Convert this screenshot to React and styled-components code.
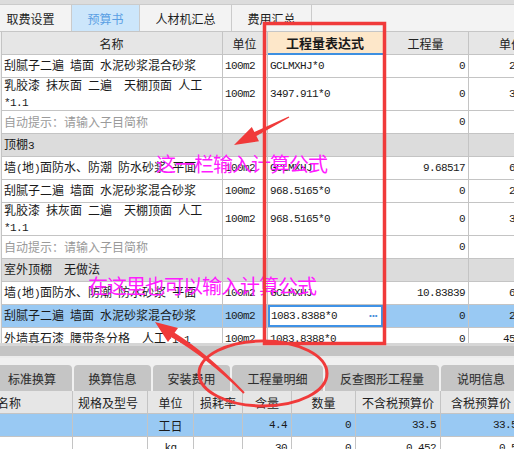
import React from "react";
import styled, { createGlobalStyle } from "styled-components";

const GlobalStyle = createGlobalStyle`
  html, body {
    margin: 0;
    padding: 0;
  }
  body {
    background: #f0f0f0;
    font-family: "Noto Sans CJK SC", "Noto Sans", sans-serif;
    color: #1a1a1a;
  }
`;

const LINE = "#c4c4c4";
const SELECTED = "#99c9f3";

const TOP_TABS = [
  { label: "取费设置", w: 82 },
  { label: "预算书", w: 68, active: true },
  { label: "人材机汇总", w: 92 },
  { label: "费用汇总", w: 80 },
];

const ROWS = [
  { name: "刮腻子二遍 墙面 水泥砂浆混合砂浆", unit: "100m2", expr: "GCLMXHJ*0", qty: "0", price: "2345.67" },
  { name: "乳胶漆 抹灰面 二遍  天棚顶面 人工\n*1.1", unit: "100m2", expr: "3497.911*0", qty: "0", price: "3216.40", h: 33 },
  { name: "自动提示：请输入子目简称", hint: true, qty: "0" },
  { group: "顶棚3" },
  { name: "墙(地)面防水、防潮 防水砂浆 平面", unit: "100m2", expr: "GCLMXHJ", qty: "9.68517", price: "6012.55" },
  { name: "刮腻子二遍 墙面 水泥砂浆混合砂浆", unit: "100m2", expr: "968.5165*0", qty: "0", price: "2345.67" },
  { name: "乳胶漆 抹灰面 二遍  天棚顶面 人工\n*1.1", unit: "100m2", expr: "968.5165*0", qty: "0", price: "3216.40", h: 33 },
  { name: "自动提示：请输入子目简称", hint: true, qty: "0" },
  { group: "室外顶棚  无做法" },
  { name: "墙(地)面防水、防潮 防水砂浆 平面", unit: "100m2", expr: "GCLMXHJ", qty: "10.83839", price: "6012.55" },
  { name: "刮腻子二遍 墙面 水泥砂浆混合砂浆", unit: "100m2", expr: "1083.8388*0", qty: "0", price: "2345.67", selected: true },
  { name: "外墙真石漆 腰带条分格  人工*1.1", unit: "100m2", expr: "1083.8388*0", qty: "0", price: "4536.128" },
];

const BOTTOM_TABS = [
  { label: "标准换算", w: 80 },
  { label: "换算信息", w: 77 },
  { label: "安装费用", w: 77 },
  { label: "工程量明细", w: 91 },
  { label: "反查图形工程量", w: 114 },
  { label: "说明信息", w: 80 },
];

const DETAIL_HEAD = ["名称", "规格及型号", "单位", "损耗率", "含量", "数量", "不含税预算价", "含税预算价"];
const DETAIL_ALIGN = ["left", "left", "center", "center", "right", "right", "right", "right"];
const DETAIL_ROWS = [
  { cells: ["", "", "工日", "", "4.4", "0", "33.5", "33.5"], selected: true },
  { cells: ["", "", "kg", "", "30", "0", "0.452", "0.5"] },
];

const justify = (a) => (a === "right" ? "flex-end" : a === "center" ? "center" : "flex-start");

const Page = styled.div`
  position: relative;
  width: 514px;
  height: 449px;
  overflow: hidden;
  display: flex;
  flex-direction: column;
  background: #f0f0f0;
  font-size: 12px;
`;

const TopStrip = styled.div`
  flex: none;
  height: 4px;
  background: #dcdcdc;
  border-bottom: 1px solid #cbcbcb;
`;

const TabBar = styled.div`
  flex: none;
  display: flex;
  height: 26px;
  background: #f3f3f3;
  border-bottom: 1px solid #c6c6c6;
`;

const Tab = styled.div`
  flex: none;
  box-sizing: border-box;
  width: ${(p) => p.$w}px;
  border-right: 1px solid #cbcbcb;
  display: flex;
  align-items: center;
  justify-content: center;
  font-size: 12px;
  color: ${(p) => (p.$active ? "#5a9fe4" : "#1e1e1e")};
  background: ${(p) => (p.$active ? "#cce6fb" : "transparent")};

  &:first-child {
    margin-left: -10px;
  }
`;

const Sheet = styled.div`
  flex: none;
  height: 311px;
  overflow: hidden;
  margin-left: 1px;
  border-left: 1px solid ${LINE};
  background: #fff;
`;

const Row = styled.div`
  display: grid;
  grid-template-columns: 221px 45px 116px 85px 86px;
  height: ${(p) => p.$h || 23}px;
  background: ${(p) => p.$bg || "#fff"};
`;

const Cell = styled.div`
  box-sizing: border-box;
  min-width: 0;
  border-right: 1px solid ${LINE};
  border-bottom: 1px solid ${LINE};
  display: flex;
  align-items: center;
  justify-content: ${(p) => justify(p.$align)};
  padding: 0 3px 0 2px;
  overflow: hidden;
  white-space: pre;
  color: ${(p) => (p.$muted ? "#9a9a9a" : "#1a1a1a")};
`;

const HeadCell = styled(Cell)`
  justify-content: center;
  background: #e6e6e6;
  font-size: 12px;
  color: #222;
`;

const ExprHead = styled(HeadCell)`
  background: #fde7c9;
  border-bottom: 2px solid #3d8fe0;
  font-size: 13px;
  font-weight: 700;
  color: #1a1a1a;
`;

const EditCell = styled(Cell)`
  justify-content: space-between;
  background: #fff;
  box-shadow: inset 0 0 0 2px #3f92e6;
  padding: 0 6px 0 3px;
`;

const Dots = styled.span`
  color: #4a90d9;
  font-family: "DejaVu Sans", sans-serif;
  font-size: 10px;
  font-weight: 700;
  letter-spacing: -1px;
`;

const NameText = styled.span`
  display: block;
`;

const Line = styled.span`
  display: block;
  line-height: 14px;
`;

const Mono = styled.span`
  font-family: "Liberation Mono", "DejaVu Sans Mono", monospace;
  font-size: 11px;
  letter-spacing: -0.6px;
`;

const Splitter = styled.div`
  flex: none;
  height: 10px;
  background: #c4c4c4;
  border-top: 3px solid #d6d6d6;
  border-bottom: 2px solid #ececec;
`;

const BottomTabs = styled.div`
  flex: none;
  display: flex;
  gap: 2px;
  height: 26px;
  padding-top: 7px;
  background: #f0f0f0;
`;

const BottomTab = styled.div`
  flex: none;
  width: ${(p) => p.$w}px;
  border-radius: 4px 4px 0 0;
  background: #c5c5c5;
  display: flex;
  align-items: center;
  justify-content: center;
  font-size: 12px;
  color: #2e2e2e;
  text-shadow: 0 0 1px rgba(0, 0, 0, 0.15);

  &:first-child {
    margin-left: -8px;
  }
`;

const Detail = styled.div`
  flex: 1;
  overflow: hidden;
  background: #fff;
`;

const DetailRow = styled.div`
  display: grid;
  grid-template-columns: 73px 75px 46px 49px 49px 64px 85px 81px;
  height: 23px;
  background: ${(p) => p.$bg || "#fff"};
`;

const DetailCell = styled(Cell)`
  padding: 0 4px 0 ${(p) => (p.$align === "left" ? 0 : 4)}px;
`;

const DetailHead = styled(DetailCell)`
  justify-content: ${(p) => justify(p.$align === "left" && p.$first ? "left" : "center")};
  background: #e6e6e6;
  color: #222;
  text-indent: ${(p) => (p.$first ? -3 : 0)}px;
`;

const Note = styled.div`
  position: absolute;
  left: ${(p) => p.$left}px;
  top: ${(p) => p.$top}px;
  font-family: "Noto Sans CJK SC", sans-serif;
  font-size: 20px;
  font-weight: 400;
  line-height: 20px;
  letter-spacing: -1px;
  color: #ff1cff;
  white-space: nowrap;
  pointer-events: none;
`;

const Overlay = styled.svg`
  position: absolute;
  left: 0;
  top: 0;
  width: 514px;
  height: 449px;
  pointer-events: none;
`;

const Mixed = ({ text }) =>
  text
    .split(/([ -~]+)/)
    .filter(Boolean)
    .map((part, i) => (/^[ -~]+$/.test(part) ? <Mono key={i}>{part}</Mono> : <span key={i}>{part}</span>));

const Name = ({ text }) => (
  <NameText>
    {text.split("\n").map((l, i) => (
      <Line key={i}>
        <Mixed text={l} />
      </Line>
    ))}
  </NameText>
);

function BudgetRow({ row }) {
  if (row.group) {
    return (
      <Row $bg="#dcdcdc">
        <Cell>
          <Name text={row.group} />
        </Cell>
        <Cell />
        <Cell />
        <Cell />
        <Cell />
      </Row>
    );
  }
  return (
    <Row $h={row.h} $bg={row.selected ? SELECTED : "#fff"}>
      <Cell $muted={row.hint}>
        <Name text={row.name} />
      </Cell>
      <Cell>{row.unit && <Mono>{row.unit}</Mono>}</Cell>
      {row.selected ? (
        <EditCell>
          <Mono>{row.expr}</Mono>
          <Dots>···</Dots>
        </EditCell>
      ) : (
        <Cell>{row.expr && <Mono>{row.expr}</Mono>}</Cell>
      )}
      <Cell $align="right">{row.qty && <Mono>{row.qty}</Mono>}</Cell>
      <Cell $align="right">{row.price && <Mono>{row.price}</Mono>}</Cell>
    </Row>
  );
}

export default function App() {
  return (
    <>
      <GlobalStyle />
      <Page>
        <TopStrip />
        <TabBar>
          {TOP_TABS.map((t) => (
            <Tab key={t.label} $w={t.w} $active={t.active}>
              {t.label}
            </Tab>
          ))}
        </TabBar>

        <Sheet>
          <Row>
            <HeadCell>名称</HeadCell>
            <HeadCell>单位</HeadCell>
            <ExprHead>工程量表达式</ExprHead>
            <HeadCell>工程量</HeadCell>
            <HeadCell>单价</HeadCell>
          </Row>
          {ROWS.map((r, i) => (
            <BudgetRow key={i} row={r} />
          ))}
        </Sheet>

        <Splitter />
        <BottomTabs>
          {BOTTOM_TABS.map((t) => (
            <BottomTab key={t.label} $w={t.w}>
              {t.label}
            </BottomTab>
          ))}
        </BottomTabs>

        <Detail>
          <DetailRow $bg="#e6e6e6">
            {DETAIL_HEAD.map((h, i) => (
              <DetailHead key={h} $align={DETAIL_ALIGN[i]} $first={i === 0}>
                {h}
              </DetailHead>
            ))}
          </DetailRow>
          {DETAIL_ROWS.map((r, ri) => (
            <DetailRow key={ri} $bg={r.selected ? SELECTED : "#fff"}>
              {r.cells.map((c, i) => (
                <DetailCell key={i} $align={DETAIL_ALIGN[i]}>
                  <Mixed text={c} />
                </DetailCell>
              ))}
            </DetailRow>
          ))}
        </Detail>

        <Note $left={156} $top={154}>这一栏输入计算公式</Note>
        <Note $left={88} $top={276}>在这里也可以输入计算公式</Note>

        <Overlay viewBox="0 0 514 449">
          <rect x="264.5" y="23.5" width="120" height="320" fill="none" stroke="#f03a3a" strokeWidth="3.5" />
          <polygon
            fill="#f03a3a"
            points="234,145 259,141.2 256.4,136.1 289.3,117.5 288.7,116.5 254.4,132.1 251.8,127"
          />
          <ellipse cx="263" cy="373.5" rx="64" ry="32.5" fill="none" stroke="#f03a3a" strokeWidth="3" />
          <path
            fill="#f03a3a"
            d="M155,322 L178,328.1 L174.6,332.7 Q209.3,354.5 244.7,392.3 L243.3,393.7 Q206.7,357.5 171.4,337.3 L168,341.9 Z"
          />
        </Overlay>
      </Page>
    </>
  );
}
